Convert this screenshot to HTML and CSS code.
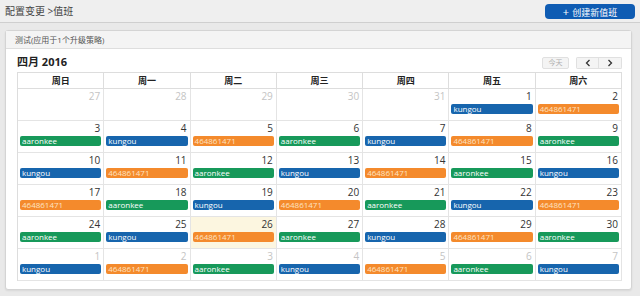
FILE: index.html
```html
<!DOCTYPE html>
<html lang="zh-CN">
<head>
    <meta charset="UTF-8">
    <title>值班</title>
    <link rel="stylesheet" href="styles.css">
</head>
<body>
    <!-- 顶栏 -->
    <div class="topbar">
        <div class="crumb">配置变更 &gt;值班</div>
        <div class="btn-create"><span class="plus">+</span>创建新值班</div>
    </div>

    <div class="main">
        <div class="panel">
            <div class="panel-head">测试(应用于1个升级策略)</div>
            <div class="cal">
                <div class="cal-toolbar">
                    <div class="cal-title">四月 2016</div>
                    <div class="cal-btns">
                        <div class="btn-today">今天</div>
                        <div class="btn-group">
                            <div class="btn-nav">
                                <svg width="8" height="8" viewBox="0 0 8 8"><path d="M5.5 1 L2.5 4 L5.5 7" fill="none" stroke="#333" stroke-width="1.3"/></svg>
                            </div>
                            <div class="btn-nav">
                                <svg width="8" height="8" viewBox="0 0 8 8"><path d="M2.5 1 L5.5 4 L2.5 7" fill="none" stroke="#333" stroke-width="1.3"/></svg>
                            </div>
                        </div>
                    </div>
                </div>

                <div class="cal-grid">
                    <div class="dow">周日</div>
                    <div class="dow">周一</div>
                    <div class="dow">周二</div>
                    <div class="dow">周三</div>
                    <div class="dow">周四</div>
                    <div class="dow">周五</div>
                    <div class="dow">周六</div>

                    <!-- 第1周 -->
                    <div class="day other"><div class="num">27</div></div>
                    <div class="day other"><div class="num">28</div></div>
                    <div class="day other"><div class="num">29</div></div>
                    <div class="day other"><div class="num">30</div></div>
                    <div class="day other"><div class="num">31</div></div>
                    <div class="day"><div class="num">1</div><div class="ev blue">kungou</div></div>
                    <div class="day"><div class="num">2</div><div class="ev orange">464861471</div></div>

                    <!-- 第2周 -->
                    <div class="day"><div class="num">3</div><div class="ev green">aaronkee</div></div>
                    <div class="day"><div class="num">4</div><div class="ev blue">kungou</div></div>
                    <div class="day"><div class="num">5</div><div class="ev orange">464861471</div></div>
                    <div class="day"><div class="num">6</div><div class="ev green">aaronkee</div></div>
                    <div class="day"><div class="num">7</div><div class="ev blue">kungou</div></div>
                    <div class="day"><div class="num">8</div><div class="ev orange">464861471</div></div>
                    <div class="day"><div class="num">9</div><div class="ev green">aaronkee</div></div>

                    <!-- 第3周 -->
                    <div class="day"><div class="num">10</div><div class="ev blue">kungou</div></div>
                    <div class="day"><div class="num">11</div><div class="ev orange">464861471</div></div>
                    <div class="day"><div class="num">12</div><div class="ev green">aaronkee</div></div>
                    <div class="day"><div class="num">13</div><div class="ev blue">kungou</div></div>
                    <div class="day"><div class="num">14</div><div class="ev orange">464861471</div></div>
                    <div class="day"><div class="num">15</div><div class="ev green">aaronkee</div></div>
                    <div class="day"><div class="num">16</div><div class="ev blue">kungou</div></div>

                    <!-- 第4周 -->
                    <div class="day"><div class="num">17</div><div class="ev orange">464861471</div></div>
                    <div class="day"><div class="num">18</div><div class="ev green">aaronkee</div></div>
                    <div class="day"><div class="num">19</div><div class="ev blue">kungou</div></div>
                    <div class="day"><div class="num">20</div><div class="ev orange">464861471</div></div>
                    <div class="day"><div class="num">21</div><div class="ev green">aaronkee</div></div>
                    <div class="day"><div class="num">22</div><div class="ev blue">kungou</div></div>
                    <div class="day"><div class="num">23</div><div class="ev orange">464861471</div></div>

                    <!-- 第5周 -->
                    <div class="day"><div class="num">24</div><div class="ev green">aaronkee</div></div>
                    <div class="day"><div class="num">25</div><div class="ev blue">kungou</div></div>
                    <div class="day today"><div class="num">26</div><div class="ev orange">464861471</div></div>
                    <div class="day"><div class="num">27</div><div class="ev green">aaronkee</div></div>
                    <div class="day"><div class="num">28</div><div class="ev blue">kungou</div></div>
                    <div class="day"><div class="num">29</div><div class="ev orange">464861471</div></div>
                    <div class="day"><div class="num">30</div><div class="ev green">aaronkee</div></div>

                    <!-- 第6周 -->
                    <div class="day other"><div class="num">1</div><div class="ev blue">kungou</div></div>
                    <div class="day other"><div class="num">2</div><div class="ev orange">464861471</div></div>
                    <div class="day other"><div class="num">3</div><div class="ev green">aaronkee</div></div>
                    <div class="day other"><div class="num">4</div><div class="ev blue">kungou</div></div>
                    <div class="day other"><div class="num">5</div><div class="ev orange">464861471</div></div>
                    <div class="day other"><div class="num">6</div><div class="ev green">aaronkee</div></div>
                    <div class="day other"><div class="num">7</div><div class="ev blue">kungou</div></div>
                </div>
            </div>
        </div>
    </div>
</body>
</html>
```

FILE: styles.css
```css
/* 全局 */
* {
    margin: 0;
    padding: 0;
    box-sizing: border-box;
}

body {
    font-family: "Open Sans", "Liberation Sans", "Noto Sans CJK SC", sans-serif;
    background: #e9e9e9;
    color: #333;
    width: 640px;
    height: 296px;
    overflow: hidden;
}

/* 顶栏 */
.topbar {
    height: 23px;
    display: flex;
    justify-content: space-between;
    align-items: center;
    padding: 0 5px 1px 5px;
    background: #efefef;
    border-bottom: 1px solid #cfcfcf;
}

.crumb {
    font-size: 10px;
    color: #444;
}

.btn-create {
    width: 90px;
    height: 15px;
    margin-top: 2px;
    background: #0f5cb3;
    border-radius: 4px;
    color: #fff;
    font-size: 9px;
    line-height: 15px;
    text-align: center;
}

.btn-create .plus {
    font-size: 11px;
    margin-right: 3px;
}

/* 主面板 */
.main {
    padding: 7px 8px 0 5px;
}

.panel {
    height: 260px;
    background: #fff;
    border: 1px solid #d4d4d4;
    border-radius: 3px;
    box-shadow: 0 1px 2px rgba(0,0,0,0.08);
}

.panel-head {
    height: 18px;
    line-height: 17px;
    padding-left: 9px;
    font-size: 8px;
    color: #555;
    background: #f4f4f4;
    border-bottom: 1px solid #dedede;
}

.cal {
    padding: 0 9px 0 11px;
}

.cal-toolbar {
    height: 23px;
    display: flex;
    justify-content: space-between;
    align-items: center;
}

.cal-title {
    font-size: 11px;
    font-weight: 700;
    color: #222;
    padding-top: 1px;
}

.cal-btns {
    display: flex;
    gap: 7px;
    margin-top: 5px;
}

.btn-today,
.btn-nav {
    height: 12px;
    background: #f4f4f4;
    border: 1px solid #e0e0e0;
}

.btn-today {
    width: 27px;
    line-height: 10px;
    font-size: 7px;
    text-align: center;
    color: #b0b0b0;
    border-radius: 2px;
}

.btn-group {
    display: flex;
    border-radius: 2px;
    overflow: hidden;
}

.btn-nav {
    width: 23px;
    display: flex;
    align-items: center;
    justify-content: center;
}

.btn-nav + .btn-nav {
    border-left: none;
}

/* 日历网格 */
.cal-grid {
    display: grid;
    grid-template-columns: repeat(7, 1fr);
    grid-template-rows: 16px;
    grid-auto-rows: 32px;
    border-top: 1px solid #dddddd;
    border-left: 1px solid #dddddd;
}

.dow {
    line-height: 15px;
    font-size: 9px;
    font-weight: 700;
    text-align: center;
    color: #222;
    border-right: 1px solid #dddddd;
    border-bottom: 1px solid #dddddd;
}

.day {
    border-right: 1px solid #e4e4e4;
    border-bottom: 1px solid #e4e4e4;
    padding: 1px 1px 0 1px;
}

.day.today {
    background: #fcf6e0;
}

.num {
    height: 13px;
    line-height: 13px;
    font-size: 10px;
    text-align: right;
    padding-right: 2px;
    color: #333;
}

.other .num {
    color: #c4c4c4;
}

.ev {
    height: 10px;
    line-height: 10px;
    margin: 1px 1px 0 1px;
    padding-left: 2px;
    border-radius: 2px;
    font-size: 8px;
    color: #fff;
}

.ev.green {
    background: #17995a;
}

.ev.blue {
    background: #1765ad;
}

.ev.orange {
    background: #f48a2c;
    color: #fde3c2;
}
```
